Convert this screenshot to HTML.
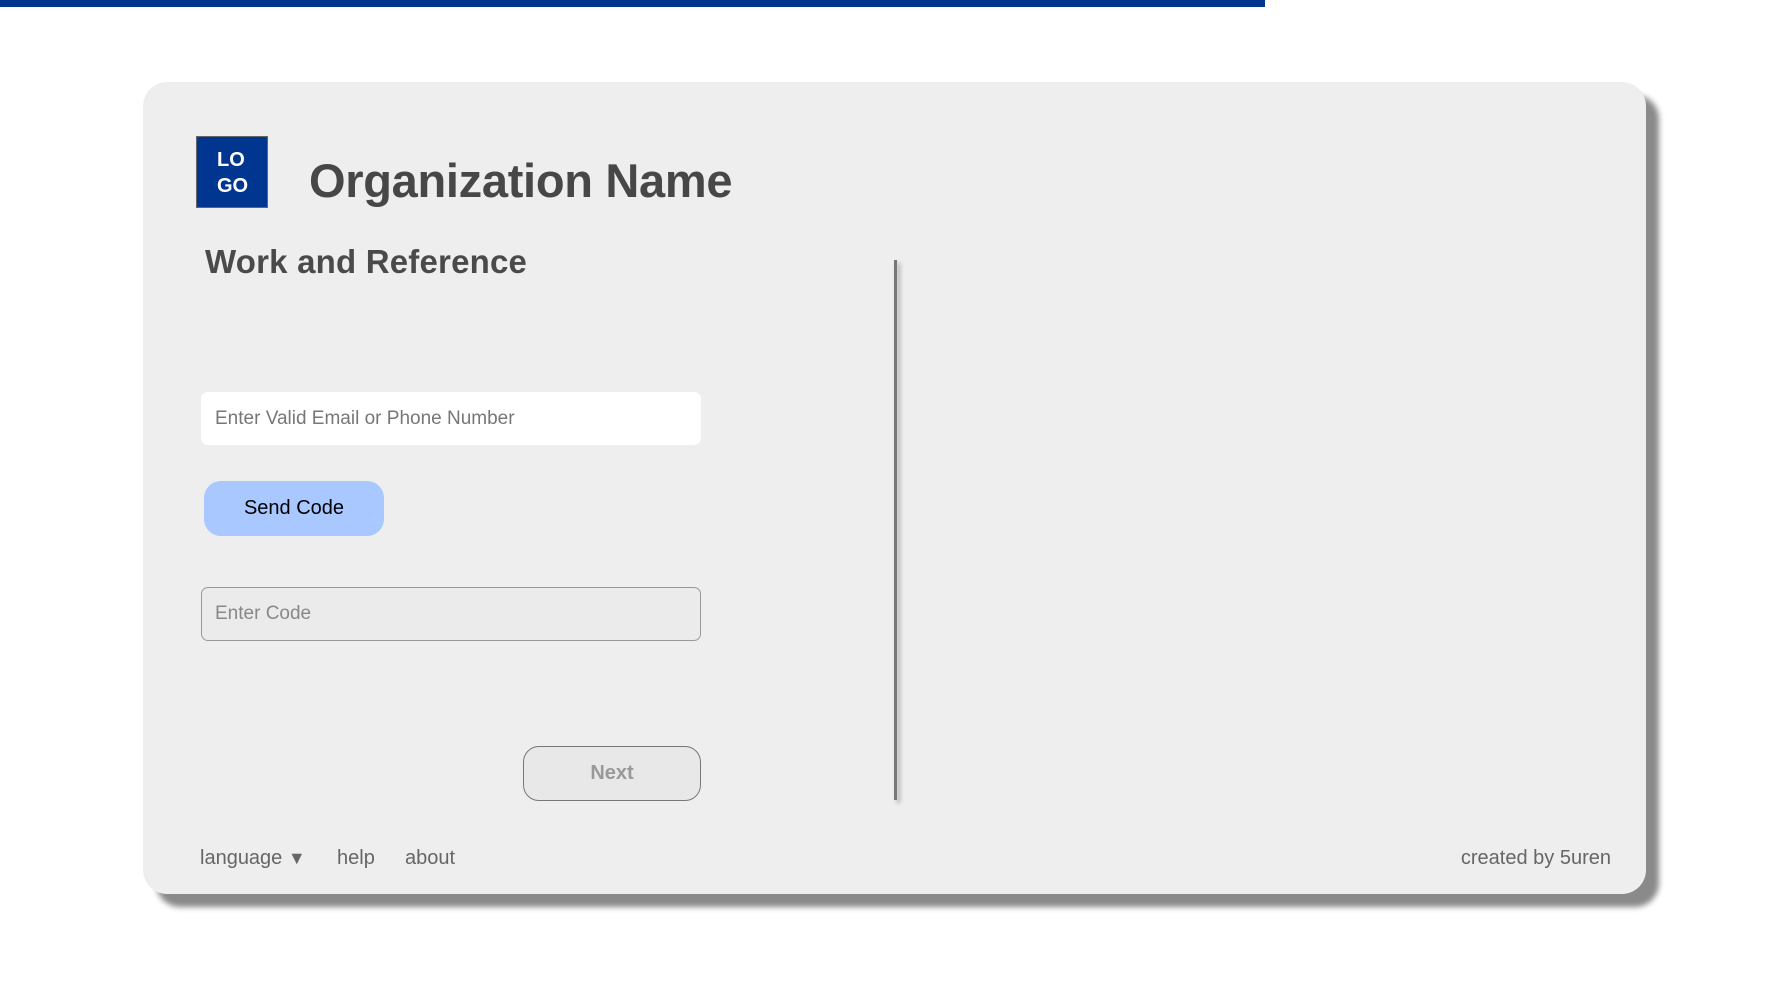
<!DOCTYPE html>
<html><head><meta charset="utf-8"><style>
*{margin:0;padding:0;box-sizing:border-box}
body{width:1786px;height:983px;background:#fff;position:relative;overflow:hidden;font-family:"Liberation Sans",sans-serif}
.bar{position:absolute;left:0;top:0;width:1265px;height:7px;background:#003590}
.card{position:absolute;left:143px;top:82px;width:1503px;height:812px;background:#eee;border-radius:24px;box-shadow:13px 13px 6px #8a8a8a}
.abs{position:absolute}
.logo{left:53px;top:54px;width:72px;height:72px;background:#003590;border:1px solid #666;color:#fff;font-weight:bold;font-size:20px;line-height:26px;padding:10px 0 0 20px}
.org{left:166px;top:71px;font-size:47px;font-weight:bold;color:#474747;letter-spacing:-0.3px}
.h2{left:62px;top:161px;font-size:33px;font-weight:bold;color:#4a4a4a;letter-spacing:0.2px}
.div{left:751px;top:178px;width:3px;height:540px;background:#777;box-shadow:3px 3px 4px #aaa}
.in1{left:58px;top:310px;width:500px;height:53px;background:#fff;border-radius:7px;color:#777;font-size:19px;padding:16px 0 0 14px}
.send{left:61px;top:399px;width:180px;height:55px;background:#a8c8ff;border-radius:17px;color:#000;font-size:20px;text-align:center;line-height:55px}
.in2{left:58px;top:505px;width:500px;height:54px;background:#ebebeb;border:1px solid #999;border-radius:7px;color:#888;font-size:19px;padding:15px 0 0 13px}
.next{left:380px;top:664px;width:178px;height:55px;background:#e8e8e8;border:1px solid #777;border-radius:16px;color:#999;font-size:20px;text-align:center;line-height:53px;font-weight:bold}
.ft{top:765px;font-size:20px;color:#666}
</style></head><body>
<div class="bar"></div>
<div class="card">
<div class="abs logo">LO<br>GO</div>
<div class="abs org">Organization Name</div>
<div class="abs h2">Work and Reference</div>
<div class="abs div"></div>
<div class="abs in1">Enter Valid Email or Phone Number</div>
<div class="abs send">Send Code</div>
<div class="abs in2">Enter Code</div>
<div class="abs next">Next</div>
<div class="abs ft" style="left:57px">language <span style="font-size:18px">▼</span></div>
<div class="abs ft" style="left:194px">help</div>
<div class="abs ft" style="left:262px">about</div>
<div class="abs ft" style="right:35px">created by 5uren</div>
</div>
</body></html>
